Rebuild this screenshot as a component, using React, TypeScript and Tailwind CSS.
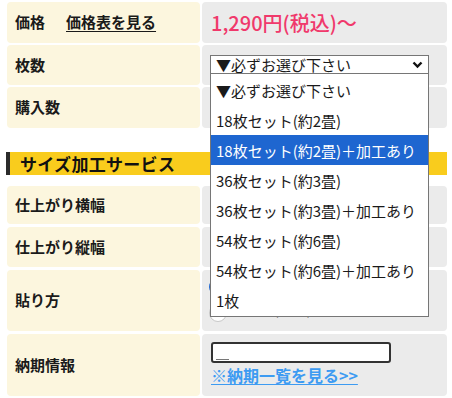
import React from "react";

const items = [
  "▼必ずお選び下さい",
  "18枚セット(約2畳)",
  "18枚セット(約2畳)＋加工あり",
  "36枚セット(約3畳)",
  "36枚セット(約3畳)＋加工あり",
  "54枚セット(約6畳)",
  "54枚セット(約6畳)＋加工あり",
  "1枚",
];

function Label({ children }: { children: React.ReactNode }) {
  return (
    <div className="w-[193px] shrink-0 bg-[#fcf6de] rounded-[4px] flex items-center pl-[8px] text-[15px] font-bold text-[#1a1a1a]">
      {children}
    </div>
  );
}

export default function App() {
  return (
    <div className="w-[452px] h-[398px] bg-white overflow-hidden font-['Noto_Sans_CJK_JP',sans-serif] text-[#1a1a1a]">
      <div className="pt-[2px] pl-[7px] pr-[5px] flex flex-col">
        {/* Row 1 */}
        <div className="flex gap-[2px] h-[41px]">
          <Label>
            <span>価格</span>
            <span className="ml-[21px] underline underline-offset-[3px] font-semibold">価格表を見る</span>
          </Label>
          <div className="flex-1 bg-[#ebebeb] rounded-[4px] flex items-center pl-[9px]">
            <span className="text-[20px] font-medium text-[#f0396b] leading-none">1,290円(税込)～</span>
          </div>
        </div>
        {/* Row 2 */}
        <div className="flex gap-[2px] h-[40px] mt-[2px] relative z-10">
          <Label>枚数</Label>
          <div className="flex-1 bg-[#ebebeb] rounded-[4px] pl-[8px] pt-[10px]">
            <div className="relative w-[219px] h-[19px] bg-white border border-[#767676] flex items-center pl-[5px] text-[15px] leading-none">
              <span>▼必ずお選び下さい</span>
              <svg className="absolute right-[5px] top-[5px]" width="11" height="8" viewBox="0 0 11 8">
                <polyline points="1.5,1.5 5.5,5.5 9.5,1.5" fill="none" stroke="#111" strokeWidth="2.4" />
              </svg>
              <div className="absolute left-[-1px] top-[17px] w-[219px] bg-white border border-[#767676] py-[1px]">
                {items.map((t, i) => (
                  <div
                    key={i}
                    className={
                      "h-[30px] flex items-center pl-[5px] text-[15px] whitespace-nowrap " +
                      (i === 2 ? "bg-[#1e66d0] text-white" : "text-[#1a1a1a]")
                    }
                  >
                    {t}
                  </div>
                ))}
              </div>
            </div>
          </div>
        </div>
        {/* Row 3 */}
        <div className="flex gap-[2px] h-[41px] mt-[2px]">
          <Label>購入数</Label>
          <div className="flex-1 bg-[#ebebeb] rounded-[4px]" />
        </div>
        {/* Section header */}
        <div className="-ml-[1px] mt-[24px] h-[23px] bg-[#f9cc1d] border-l-[4px] border-[#2b2b2b] flex items-center pl-[10px]">
          <span className="text-[17px] font-bold leading-none text-[#111] tracking-[0.3px]">サイズ加工サービス</span>
        </div>
        {/* Row 4 */}
        <div className="flex gap-[2px] h-[38px] mt-[11px]">
          <Label>仕上がり横幅</Label>
          <div className="flex-1 bg-[#ebebeb] rounded-[4px]" />
        </div>
        {/* Row 5 */}
        <div className="flex gap-[2px] h-[40px] mt-[3px]">
          <Label>仕上がり縦幅</Label>
          <div className="flex-1 bg-[#ebebeb] rounded-[4px]" />
        </div>
        {/* Row 6 */}
        <div className="flex gap-[2px] h-[61px] mt-[3px]">
          <Label>貼り方</Label>
          <div className="flex-1 bg-[#ebebeb] rounded-[4px] pl-[7px] pt-[8px] flex flex-col gap-[8px]">
            <div className="flex items-center gap-[8px]">
              <div className="w-[18px] h-[18px] rounded-full border-[2px] border-[#1e66d0] bg-white flex items-center justify-center">
                <div className="w-[8px] h-[8px] rounded-full bg-[#1e66d0]" />
              </div>
            </div>
            <div className="flex items-center">
              <div className="w-[18px] h-[18px] rounded-full border border-[#c8c8c8] bg-white" />
              <span className="ml-[47px] text-[14px] text-[#777] -mt-[8px]">(推奨)</span>
            </div>
          </div>
        </div>
        {/* Row 7 */}
        <div className="flex gap-[2px] h-[62px] mt-[3px]">
          <Label>納期情報</Label>
          <div className="flex-1 bg-[#ebebeb] rounded-[4px] pl-[9px] pt-[8px] flex flex-col">
            <div className="w-[180px] h-[21px] bg-white border-[2px] border-[#333] rounded-[3px] flex items-end pl-[3px] pb-[1px]">
              <div className="w-[13px] h-[1px] bg-[#777]" />
            </div>
            <a className="mt-[2px] text-[16px] leading-[20px] font-semibold text-[#3d9bf2] underline underline-offset-[2px]">
              ※納期一覧を見る&gt;&gt;
            </a>
          </div>
        </div>
      </div>
    </div>
  );
}
